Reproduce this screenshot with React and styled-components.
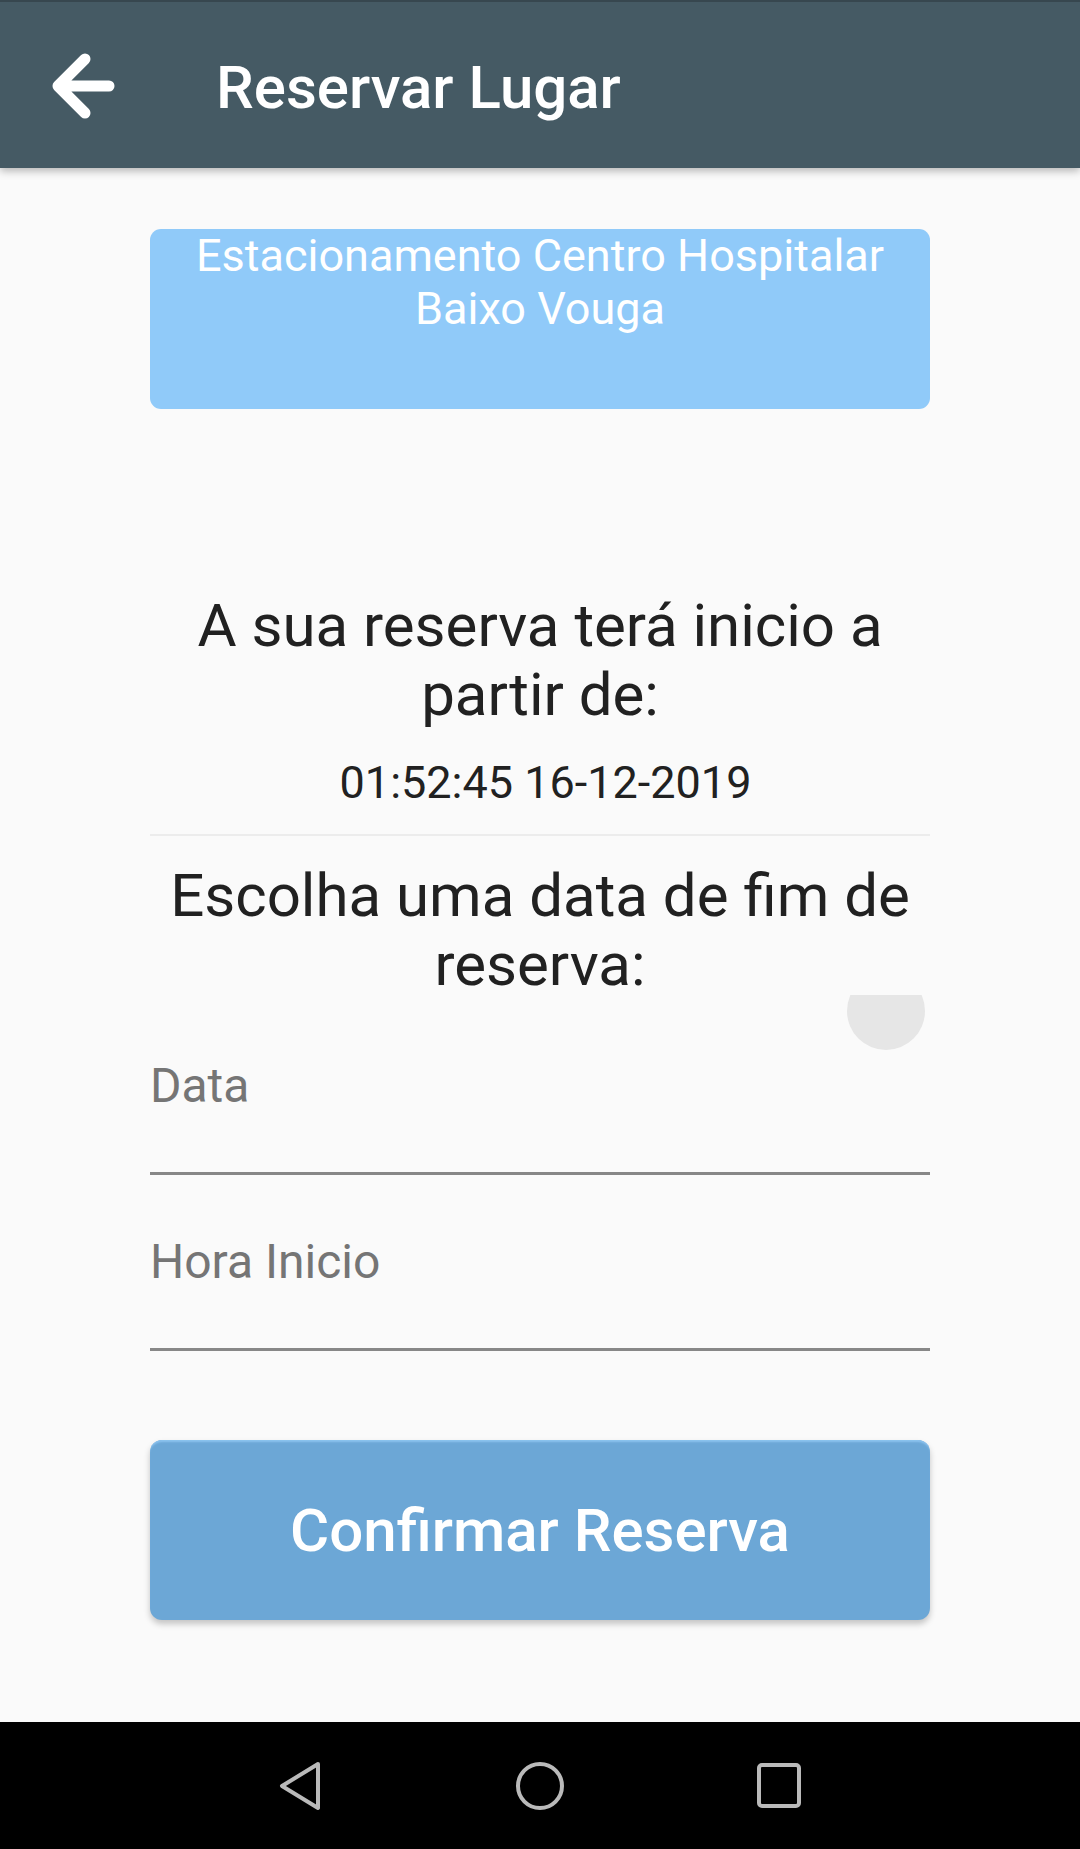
import React from "react";
import styled, { createGlobalStyle } from "styled-components";

const Global = createGlobalStyle`
  html, body { margin: 0; padding: 0; background: #fafafa; }
  body { font-family: Roboto, "Noto Sans", "Liberation Sans", sans-serif; }
  * { box-sizing: border-box; }
`;

const Screen = styled.div`
  width: 1080px;
  height: 1849px;
  display: flex;
  flex-direction: column;
  overflow: hidden;
  background: #fafafa;
`;

const AppBar = styled.header`
  height: 168px;
  flex: none;
  border-top: 2px solid #37474f;
  background: #455a64;
  display: flex;
  align-items: center;
  padding-left: 48px;
  box-shadow: 0 3px 8px rgba(0, 0, 0, 0.28);
  position: relative;
  z-index: 1;
`;

const BackButton = styled.button`
  width: 72px;
  height: 72px;
  padding: 0;
  border: none;
  background: transparent;
  display: flex;
`;

const Title = styled.h1`
  margin: 0 0 0 96px;
  padding-top: 6px;
  color: #ffffff;
  font-size: 60px;
  line-height: 70px;
  font-weight: 500;
`;

const Content = styled.main`
  flex: 1;
  display: flex;
  flex-direction: column;
  padding: 61px 150px 0;
`;

const InfoCard = styled.div`
  height: 180px;
  border-radius: 11px;
  background: #90caf9;
  color: #ffffff;
  font-size: 45px;
  line-height: 53px;
  text-align: center;
`;

const Heading = styled.h2`
  margin: ${(p) => p.$top}px 0 0;
  color: #212121;
  font-size: 60px;
  line-height: 69px;
  font-weight: 400;
  text-align: center;
`;

const DateText = styled.div`
  margin-top: 27px;
  padding-left: 11px;
  color: #212121;
  font-size: 45px;
  line-height: 53px;
  text-align: center;
`;

const Divider = styled.hr`
  margin: 25px 0 0;
  height: 2px;
  border: none;
  background: #ececec;
`;

const Fields = styled.div`
  position: relative;
  overflow: hidden;
  margin-top: -4px;
  padding-top: 63px;
`;

const Ripple = styled.span`
  position: absolute;
  top: -23px;
  right: 5px;
  width: 78px;
  height: 78px;
  border-radius: 50%;
  background: #e6e6e6;
`;

const Field = styled.label`
  display: flex;
  flex-direction: column;
  margin-top: ${(p) => p.$top || 0}px;
`;

const FieldLabel = styled.span`
  color: #757575;
  font-size: 48px;
  line-height: 56px;
`;

const Underline = styled.span`
  margin-top: 58px;
  height: 3px;
  background: #878787;
`;

const ConfirmButton = styled.button`
  margin-top: 89px;
  height: 180px;
  border: none;
  border-radius: 12px;
  background: #6ca7d6;
  color: #ffffff;
  font-family: Roboto, "Noto Sans", sans-serif;
  font-size: 60px;
  font-weight: 500;
  box-shadow: 0 4px 6px rgba(0, 0, 0, 0.22), inset 0 3px 2px -1px #8cc3ef;
`;

const NavBar = styled.nav`
  height: 127px;
  flex: none;
  background: #000000;
  display: flex;
  justify-content: center;
  align-items: center;
`;

const NavSlot = styled.div`
  width: 240px;
  display: flex;
  justify-content: center;
  align-items: center;
`;

const navStroke = "#bababa";

export default function App() {
  return (
    <Screen>
      <Global />
      <AppBar>
        <BackButton aria-label="Voltar">
          <svg width="72" height="72" viewBox="0 0 72 72">
            <path
              d="M61 37 H11 M37 10 L10 37 L37 64"
              fill="none"
              stroke="#ffffff"
              strokeWidth="11"
              strokeLinecap="round"
              strokeLinejoin="round"
            />
          </svg>
        </BackButton>
        <Title>Reservar Lugar</Title>
      </AppBar>
      <Content>
        <InfoCard>
          Estacionamento Centro Hospitalar
          <br />
          Baixo Vouga
        </InfoCard>
        <Heading $top={182}>
          A sua reserva terá inicio a
          <br />
          partir de:
        </Heading>
        <DateText>01:52:45 16-12-2019</DateText>
        <Divider />
        <Heading $top={25}>
          Escolha uma data de fim de
          <br />
          reserva:
        </Heading>
        <Fields>
          <Ripple />
          <Field>
            <FieldLabel>Data</FieldLabel>
            <Underline />
          </Field>
          <Field $top={59}>
            <FieldLabel>Hora Inicio</FieldLabel>
            <Underline />
          </Field>
        </Fields>
        <ConfirmButton>Confirmar Reserva</ConfirmButton>
      </Content>
      <NavBar>
        <NavSlot>
          <svg width="46" height="52" viewBox="0 0 46 52">
            <path
              d="M41 4 L5 26 L41 48 Z"
              fill="none"
              stroke={navStroke}
              strokeWidth="4"
              strokeLinejoin="round"
            />
          </svg>
        </NavSlot>
        <NavSlot>
          <svg width="52" height="52" viewBox="0 0 52 52">
            <circle cx="26" cy="26" r="22" fill="none" stroke={navStroke} strokeWidth="4" />
          </svg>
        </NavSlot>
        <NavSlot>
          <svg width="48" height="48" viewBox="0 0 48 48">
            <rect x="3" y="3" width="40" height="41" rx="3" fill="none" stroke={navStroke} strokeWidth="4" />
          </svg>
        </NavSlot>
      </NavBar>
    </Screen>
  );
}
